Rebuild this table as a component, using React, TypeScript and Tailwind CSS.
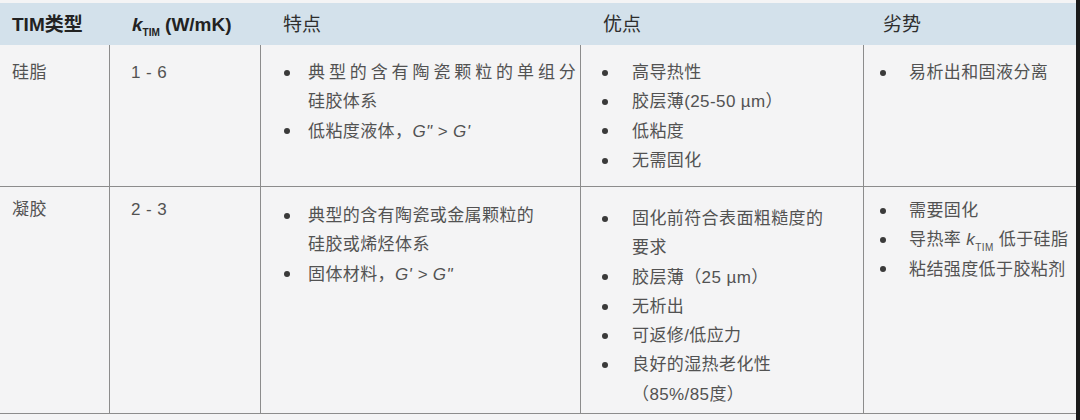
import React from "react";

const font = { fontFamily: '"Liberation Sans", "Noto Sans CJK SC", sans-serif' };

const Bullet = ({ w, children }: { w: string; children: React.ReactNode }) => (
  <div className="flex">
    <span className={`${w} flex h-[29.3px] shrink-0 items-center`}>
      <span className="h-[6px] w-[6px] rounded-full bg-[#3a3a3a]" />
    </span>
    <div>{children}</div>
  </div>
);

const KTim = ({ bold = false }: { bold?: boolean }) => (
  <span className={bold ? "font-bold" : ""}>
    <i>k</i>
    <sub className="text-[10px] not-italic align-[-3px]">TIM</sub>
  </span>
);

const c3 = "w-[24px]";
const c4 = "w-[30px]";
const c5 = "w-[29px]";

export default function App() {
  return (
    <div className="flex h-[420px] w-[1080px] bg-[#1a1a1a]" style={font}>
      <div className="flex w-[1076px] flex-col bg-[#f4f4f5] pt-[3px] text-[17px] tracking-[0.4px] text-[#525252]">
        {/* header */}
        <div className="grid h-[42px] grid-cols-[110px_151px_320px_283px_1fr] items-center bg-[#d3e1eb] pt-[2px] text-[19px] tracking-normal text-[#2e2e2e]">
          <div className="pl-[12px] font-bold text-[#222]">TIM类型</div>
          <div className="pl-[22px] font-bold text-[#222]">
            <KTim bold /> (W/mK)
          </div>
          <div className="pl-[22px]">特点</div>
          <div className="pl-[22px]">优点</div>
          <div className="pl-[19px]">劣势</div>
        </div>

        {/* row 1 */}
        <div className="grid h-[142px] grid-cols-[110px_151px_320px_283px_1fr] border-b border-[#8c8c8c] leading-[29.3px]">
          <div className="border-r border-[#8c8c8c] pl-[12px] pt-[13px]">硅脂</div>
          <div className="border-r border-[#8c8c8c] pl-[21px] pt-[13px]">1 - 6</div>
          <div className="border-r border-[#8c8c8c] pl-[23px] pt-[13px]">
            <Bullet w={c3}>
              <span className="tracking-[3.9px]">典型的含有陶瓷颗粒的单组分</span>
              <br />
              硅胶体系
            </Bullet>
            <Bullet w={c3}>
              低粘度液体，<i>G" &gt; G'</i>
            </Bullet>
          </div>
          <div className="border-r border-[#8c8c8c] pl-[21px] pt-[13px]">
            <Bullet w={c4}>高导热性</Bullet>
            <Bullet w={c4}>胶层薄(25-50 µm）</Bullet>
            <Bullet w={c4}>低粘度</Bullet>
            <Bullet w={c4}>无需固化</Bullet>
          </div>
          <div className="pl-[16px] pt-[13px]">
            <Bullet w={c5}>易析出和固液分离</Bullet>
          </div>
        </div>

        {/* row 2 */}
        <div className="grid h-[227px] grid-cols-[110px_151px_320px_283px_1fr] border-b border-[#8c8c8c] leading-[29.3px]">
          <div className="border-r border-[#8c8c8c] pl-[12px] pt-[8px]">凝胶</div>
          <div className="border-r border-[#8c8c8c] pl-[21px] pt-[8px]">2 - 3</div>
          <div className="border-r border-[#8c8c8c] pl-[23px] pt-[14px]">
            <Bullet w={c3}>
              典型的含有陶瓷或金属颗粒的
              <br />
              硅胶或烯烃体系
            </Bullet>
            <Bullet w={c3}>
              固体材料，<i>G' &gt; G"</i>
            </Bullet>
          </div>
          <div className="border-r border-[#8c8c8c] pl-[21px] pt-[17px]">
            <Bullet w={c4}>
              固化前符合表面粗糙度的
              <br />
              要求
            </Bullet>
            <Bullet w={c4}>胶层薄（25 µm）</Bullet>
            <Bullet w={c4}>无析出</Bullet>
            <Bullet w={c4}>可返修/低应力</Bullet>
            <Bullet w={c4}>
              良好的湿热老化性
              <br />
              （85%/85度）
            </Bullet>
          </div>
          <div className="pl-[16px] pt-[9px]">
            <Bullet w={c5}>需要固化</Bullet>
            <Bullet w={c5}>
              导热率 <KTim /> 低于硅脂
            </Bullet>
            <Bullet w={c5}>粘结强度低于胶粘剂</Bullet>
          </div>
        </div>
      </div>
    </div>
  );
}
